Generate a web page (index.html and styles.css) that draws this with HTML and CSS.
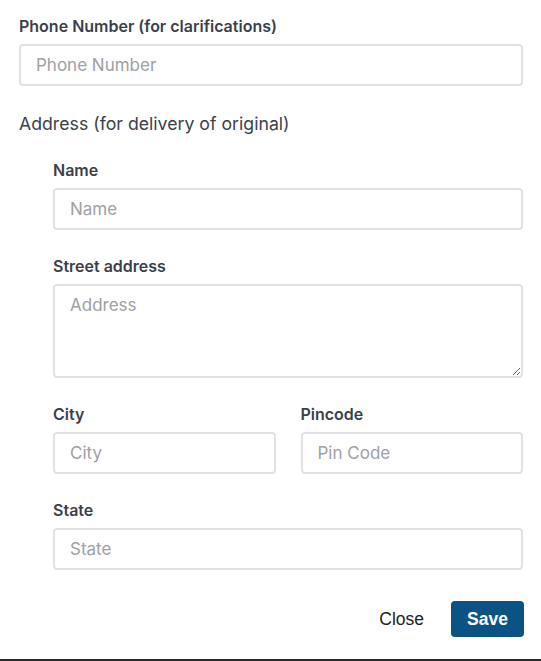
FILE: index.html
```html
<!DOCTYPE html>
<html>
<head>
<meta charset="utf-8">
<link rel="stylesheet" href="styles.css">
</head>
<body>
<div class="page">
  <div class="form">
    <div class="field">
      <label class="label">Phone Number (for clarifications)</label>
      <input class="input" type="text" placeholder="Phone Number">
    </div>
    <div class="section-title">Address (for delivery of original)</div>
    <div class="nested">
      <div class="field">
        <label class="label">Name</label>
        <input class="input" type="text" placeholder="Name">
      </div>
      <div class="field">
        <label class="label">Street address</label>
        <textarea class="input textarea" placeholder="Address"></textarea>
      </div>
      <div class="row">
        <div class="field">
          <label class="label">City</label>
          <input class="input" type="text" placeholder="City">
        </div>
        <div class="field">
          <label class="label">Pincode</label>
          <input class="input" type="text" placeholder="Pin Code">
        </div>
      </div>
      <div class="field">
        <label class="label">State</label>
        <input class="input" type="text" placeholder="State">
      </div>
    </div>
    <div class="actions">
      <button class="btn btn-close" type="button">Close</button>
      <button class="btn btn-save" type="button">Save</button>
    </div>
  </div>
</div>
</body>
</html>
```
FILE: styles.css
```css
* { box-sizing: border-box; }
html, body { margin: 0; padding: 0; background: #fff; }
.page {
  height: 661px;
  border-bottom: 2px solid #2a2a30;
  overflow: hidden;
}
.form {
  padding: 16px 18px 0 19px;
  font-family: Inter, "Liberation Sans", sans-serif;
}
.field {
  display: flex;
  flex-direction: column;
  margin-bottom: 26px;
}
.label {
  font-size: 16px;
  line-height: 20px;
  font-weight: 600;
  color: #3b3f4b;
  margin-bottom: 8px;
}
.input {
  height: 42px;
  border: 2px solid #e1e2e8;
  border-radius: 4px;
  padding: 0 15px;
  font-family: Inter, "Liberation Sans", sans-serif;
  font-size: 17px;
  color: #333;
  background: #fff;
  outline: none;
  width: 100%;
}
.input::placeholder { color: #a0a0a5; }
.textarea {
  height: 94px;
  padding-top: 8px;
  resize: vertical;
  line-height: 22px;
}
.section-title {
  font-size: 17.7px;
  line-height: 24px;
  color: #3b3f4b;
  margin-bottom: 24px;
  margin-top: 0;
}
.nested {
  padding-left: 34px;
}
.row {
  display: grid;
  grid-template-columns: 1fr 1fr;
  column-gap: 25px;
}
.actions {
  display: flex;
  justify-content: flex-end;
  align-items: center;
  gap: 15px;
  margin-top: 31px;
  margin-right: -1px;
}
.btn {
  font-family: "Liberation Sans", Arial, sans-serif;
  font-size: 17.5px;
  border: none;
  cursor: pointer;
  height: 36px;
  border-radius: 4px;
}
.btn-close {
  background: transparent;
  color: #222;
  padding: 0 12px;
}
.btn-save {
  background: #0b5384;
  color: #fff;
  font-weight: 600;
  width: 73px;
  padding: 0;
}
```
